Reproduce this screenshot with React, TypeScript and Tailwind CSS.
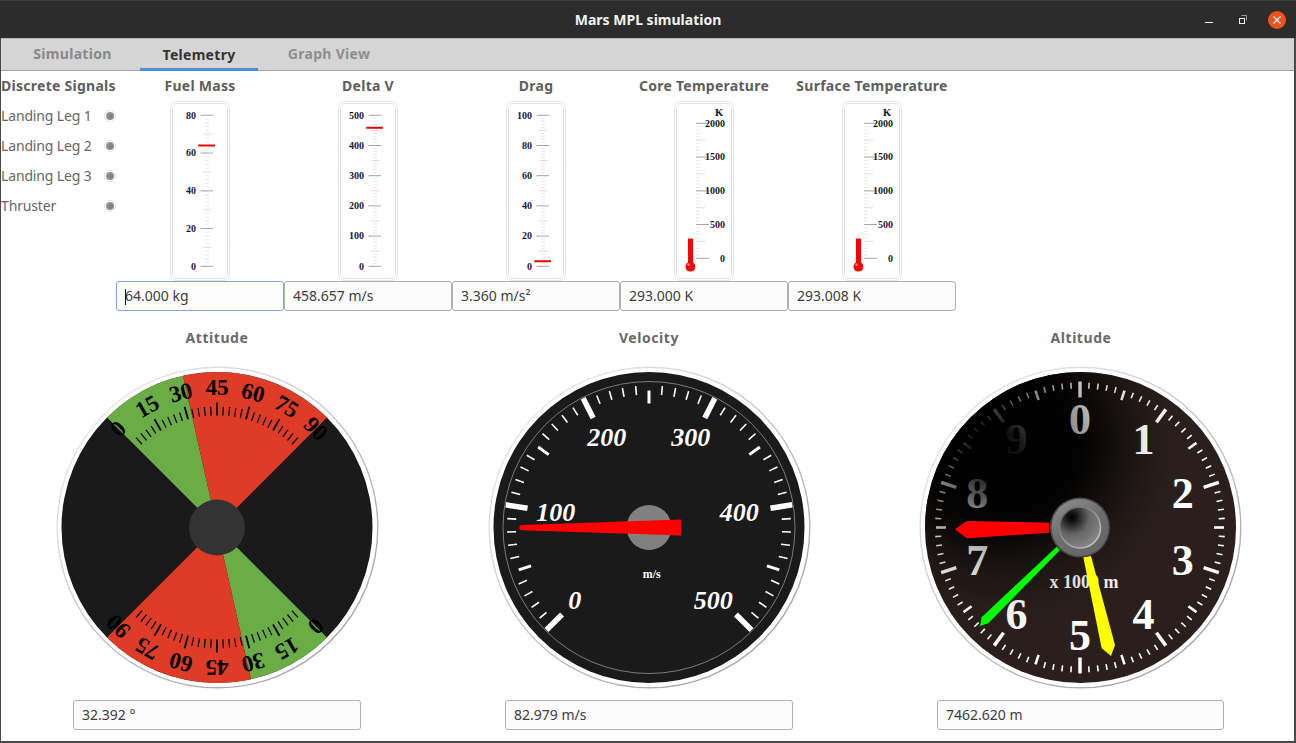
import React from "react";

const UI = "font-['Noto_Sans','Open_Sans',sans-serif]";
const SERIF = "'Liberation Serif','Times New Roman',serif";

const f = (n: number) => Math.round(n * 100) / 100;
function pol(cx: number, cy: number, r: number, deg: number): [number, number] {
  const a = (deg * Math.PI) / 180;
  return [f(cx + r * Math.sin(a)), f(cy - r * Math.cos(a))];
}
function range(n: number) {
  return Array.from({ length: n }, (_, i) => i);
}

function Sector({ cx, cy, r, from, to, fill }: { cx: number; cy: number; r: number; from: number; to: number; fill: string }) {
  const [x1, y1] = pol(cx, cy, r, from);
  const [x2, y2] = pol(cx, cy, r, to);
  return <path d={`M${cx} ${cy}L${x1} ${y1}A${r} ${r} 0 0 1 ${x2} ${y2}Z`} fill={fill} />;
}

function Ring({ id, cx, cy }: { id: string; cx: number; cy: number }) {
  return (
    <>
      <defs>
        <linearGradient id={id} x1="0.15" y1="0.1" x2="0.85" y2="0.9">
          <stop offset="0" stopColor="#e8e8e8" />
          <stop offset="1" stopColor="#a4a4a4" />
        </linearGradient>
      </defs>
      <circle cx={cx} cy={cy} r={160.3} fill="#ffffff" stroke={`url(#${id})`} strokeWidth={1.4} />
    </>
  );
}

function Attitude() {
  const cx = 165;
  const cy = 164.5;
  const half = (rot: number) => (
    <g transform={`rotate(${rot} ${cx} ${cy})`}>
      <Sector cx={cx} cy={cy} r={155.5} from={-45} to={-12.6} fill="#6aac46" />
      <Sector cx={cx} cy={cy} r={155.5} from={-12.6} to={45} fill="#de3c26" />
      {range(29).map((i) => {
        const v = -42 + i * 3;
        const maj = (v + 45) % 15 === 0;
        const [x1, y1] = pol(cx, cy, 112, v);
        const [x2, y2] = pol(cx, cy, maj ? 125 : 121, v);
        return <line key={i} x1={x1} y1={y1} x2={x2} y2={y2} stroke="#000" strokeWidth={maj ? 1.8 : 1.2} />;
      })}
      {[0, 15, 30, 45, 60, 75, 90].map((v) => {
        const a = v - 45;
        const [x, y] = pol(cx, cy, 139, a);
        return (
          <text key={v} x={x} y={y} dy="0.3em" textAnchor="middle" fontFamily={SERIF} fontWeight={700} fontSize={23} fill="#000" transform={`rotate(${a} ${x} ${y})`}>
            {v}
          </text>
        );
      })}
    </g>
  );
  return (
    <svg width={330} height={330} viewBox="0 0 330 330" className="block">
      <Ring id="ringA" cx={cx + 0.5} cy={cy} />
      <circle cx={cx} cy={cy} r={155.5} fill="#1a1a1a" />
      {half(0)}
      {half(180)}
      <circle cx={cx} cy={cy} r={28} fill="#333333" />
    </svg>
  );
}

function Velocity() {
  const cx = 165;
  const cy = 164.5;
  const labels: [string, number, number][] = [
    ["0", 284, 750],
    ["100", 227, 486],
    ["200", 380, 260],
    ["300", 632, 260],
    ["400", 778, 485],
    ["500", 700, 750],
  ];
  return (
    <svg width={330} height={330} viewBox="0 0 330 330" className="block">
      <Ring id="ringV" cx={cx + 0.5} cy={cy} />
      <circle cx={cx} cy={cy} r={155.5} fill="#1a1a1a" />
      <circle cx={cx} cy={cy} r={146} fill="none" stroke="#7a7a7a" strokeWidth={1} />
      {range(51).map((i) => {
        const a = -135 + i * 5.4;
        const major = i % 10 === 0;
        const med = i % 5 === 0;
        const r1 = major ? 123 : med ? 124 : 133;
        const r2 = major ? 145 : med ? 137 : 142;
        const [x1, y1] = pol(cx, cy, r1, a);
        const [x2, y2] = pol(cx, cy, r2, a);
        return <line key={i} x1={x1} y1={y1} x2={x2} y2={y2} stroke="#fff" strokeWidth={major ? 5.5 : med ? 3 : 1.6} />;
      })}
      {labels.map(([t, zx, zy]) => (
        <text key={t} x={f(zx / 3 - 4)} y={f(zy / 3 - 13)} dy="0.34em" textAnchor="middle" fontFamily={SERIF} fontWeight={700} fontStyle="italic" fontSize={26} fill="#fff">
          {t}
        </text>
      ))}
      <text x={f(515 / 3 - 4)} y={f(672 / 3 - 13)} dy="0.34em" textAnchor="middle" fontFamily={SERIF} fontWeight={700} fontSize={12} fill="#fff">
        m/s
      </text>
      <circle cx={cx} cy={cy} r={22.5} fill="#808080" />
      <path
        d={`M${cx + 32} ${cy - 8}L${cx + 32} ${cy + 8}L${cx - 127} ${cy + 2.8}A2.6 2.6 0 0 1 ${cx - 127} ${cy - 2.6}Z`}
        fill="#ff0000"
      />
    </svg>
  );
}

function Altitude() {
  const cx = 164;
  const cy = 164.5;
  const z = (zx: number, zy: number) => `${f(zx / 3 - 6)},${f(zy / 3 - 13)}`;
  return (
    <svg width={330} height={330} viewBox="0 0 330 330" className="block">
      <defs>
        <radialGradient id="altUnder" gradientUnits="userSpaceOnUse" cx={88} cy={78} r={170}>
          <stop offset="0" stopColor="#000" stopOpacity={1} />
          <stop offset="0.45" stopColor="#000" stopOpacity={0.85} />
          <stop offset="0.8" stopColor="#000" stopOpacity={0.15} />
          <stop offset="1" stopColor="#000" stopOpacity={0} />
        </radialGradient>
        <radialGradient id="altShade" gradientUnits="userSpaceOnUse" cx={80.7} cy={87} r={190}>
          <stop offset="0" stopColor="#000" stopOpacity={0.97} />
          <stop offset="0.12" stopColor="#000" stopOpacity={0.93} />
          <stop offset="0.2" stopColor="#000" stopOpacity={0.78} />
          <stop offset="0.26" stopColor="#000" stopOpacity={0.66} />
          <stop offset="0.33" stopColor="#000" stopOpacity={0.5} />
          <stop offset="0.47" stopColor="#000" stopOpacity={0.38} />
          <stop offset="0.54" stopColor="#000" stopOpacity={0.25} />
          <stop offset="0.78" stopColor="#000" stopOpacity={0.08} />
          <stop offset="1" stopColor="#000" stopOpacity={0} />
        </radialGradient>
        <linearGradient id="altHubOuter" x1="0.2" y1="0" x2="0.8" y2="1">
          <stop offset="0" stopColor="#8c8c8c" />
          <stop offset="0.5" stopColor="#6c6c6c" />
          <stop offset="1" stopColor="#666666" />
        </linearGradient>
        <radialGradient id="altHubInner" cx="0.3" cy="0.25" r="0.85">
          <stop offset="0" stopColor="#000" />
          <stop offset="0.12" stopColor="#111" />
          <stop offset="0.5" stopColor="#666" />
          <stop offset="1" stopColor="#8a8a8a" />
        </radialGradient>
        <linearGradient id="altHubRing" x1="0.15" y1="0.1" x2="0.85" y2="0.9">
          <stop offset="0" stopColor="#6a6a6a" />
          <stop offset="1" stopColor="#c4c4c4" />
        </linearGradient>
      </defs>
      <Ring id="ringH" cx={cx + 0.5} cy={cy} />
      <circle cx={cx + 0.5} cy={cy} r={155.5} fill="#2a1f1c" />
      <circle cx={cx + 0.5} cy={cy} r={155.5} fill="url(#altUnder)" />
      {range(100).map((i) => {
        const a = i * 3.6;
        const major = i % 10 === 0;
        const med = i % 5 === 0;
        const r1 = major ? 130 : med ? 134 : 139;
        const r2 = major ? 146 : med ? 144 : 145;
        const [x1, y1] = pol(cx, cy, r1, a);
        const [x2, y2] = pol(cx, cy, r2, a);
        return <line key={i} x1={x1} y1={y1} x2={x2} y2={y2} stroke="#fff" strokeWidth={major ? 3.5 : med ? 2.6 : 1.6} />;
      })}
      {range(10).map((i) => {
        const [x, y] = pol(cx, cy, 108, i * 36);
        return (
          <text key={i} x={x} y={y} dy="0.32em" textAnchor="middle" fontFamily={SERIF} fontWeight={700} fontSize={44} fill="#fff">
            {i}
          </text>
        );
      })}
      <text x={f(522 / 3 - 6)} y={f(697 / 3 - 13)} dy="0.34em" textAnchor="middle" fontFamily={SERIF} fontWeight={700} fontSize={18} fill="#f2f2f2">
        x 1000 m
      </text>
      <circle cx={cx + 0.5} cy={cy} r={155.5} fill="url(#altShade)" />
      <polygon points={[z(418, 518), z(170, 513), z(135, 538), z(170, 565), z(418, 548)].join(" ")} fill="#ff0000" />
      <polygon points={[z(440, 590), z(450, 600), z(235, 820), z(210, 828), z(215, 802)].join(" ")} fill="#00ff00" />
      <polygon points={[z(520, 622), z(543, 618), z(615, 885), z(603, 918), z(575, 895)].join(" ")} fill="#ffff00" />
      <circle cx={cx} cy={cy} r={30} fill="#4a4a4a" />
      <circle cx={cx} cy={cy} r={28.5} fill="url(#altHubOuter)" />
      <circle cx={cx} cy={cy} r={20.5} fill="url(#altHubInner)" stroke="url(#altHubRing)" strokeWidth={1.6} />
    </svg>
  );
}

function ScaleTicks({ top, bottom, majors, x, wMaj, wPink, wMin, minorX }: { top: number; bottom: number; majors: number; x: number; wMaj: number; wPink: [number, number]; wMin: [number, number]; minorX: number }) {
  const divs = majors * 10;
  const step = (bottom - top) / divs;
  const midMajor = majors % 2 === 0 ? divs / 2 : -1;
  return (
    <>
      {range(divs + 1).map((i) => {
        const y = f(top + i * step);
        if (i % 10 === 0) {
          const isMid = i === midMajor;
          return <line key={i} x1={x} y1={y} x2={x + wMaj} y2={y} stroke={isMid ? "#c4c4c4" : "#9a9a9a"} strokeWidth={isMid ? 1.6 : 0.9} />;
        }
        if (i % 5 === 0) {
          return <line key={i} x1={wPink[0]} y1={y} x2={wPink[1]} y2={y} stroke="#fbc4c4" strokeWidth={0.8} />;
        }
        return <line key={i} x1={minorX} y1={y} x2={minorX + (wMin[1] - wMin[0])} y2={y} stroke="#e2e2e2" strokeWidth={0.8} />;
      })}
    </>
  );
}

function Card() {
  return (
    <>
      <rect x={0.5} y={0.5} width={59} height={179} rx={6} fill="#fff" stroke="#e6e6e6" />
      <rect x={2.5} y={2.5} width={55} height={175} rx={5} fill="#fff" stroke="#e0e0e0" />
    </>
  );
}

function BarGauge({ labels, frac }: { labels: string[]; frac: number }) {
  const top = 14.3;
  const bottom = 165.3;
  const majors = labels.length - 1;
  const step = (bottom - top) / majors;
  const my = f(bottom - frac * (bottom - top));
  return (
    <svg width={60} height={180} viewBox="0 0 60 180" className="block mx-auto">
      <Card />
      <ScaleTicks top={top} bottom={bottom} majors={majors} x={30.5} wMaj={12.5} wPink={[33, 41.5]} wMin={[35, 39]} minorX={35} />
      {labels.map((t, i) => (
        <text key={t} x={26} y={f(top + i * step)} dy="0.33em" textAnchor="end" fontFamily={SERIF} fontWeight={700} fontSize={10} fill="#1a1a2e">
          {t}
        </text>
      ))}
      <line x1={28.3} y1={my} x2={45} y2={my} stroke="#f00000" strokeWidth={2} />
    </svg>
  );
}

function Thermo({ frac }: { frac: number }) {
  const top = 22.3;
  const bottom = 157.3;
  const labels = ["2000", "1500", "1000", "500", "0"];
  const step = (bottom - top) / 4;
  const my = f(bottom - frac * (bottom - top));
  return (
    <svg width={60} height={180} viewBox="0 0 60 180" className="block mx-auto">
      <Card />
      <text x={45} y={11.7} dy="0.34em" textAnchor="middle" fontFamily={SERIF} fontWeight={700} fontSize={10.5} fill="#111">
        K
      </text>
      <ScaleTicks top={top} bottom={bottom} majors={4} x={22} wMaj={13} wPink={[22, 31]} wMin={[22, 26]} minorX={22} />
      {labels.map((t, i) => (
        <text key={t} x={51} y={f(top + i * step)} dy="0.33em" textAnchor="end" fontFamily={SERIF} fontWeight={700} fontSize={10} fill="#1a1a2e">
          {t}
        </text>
      ))}
      <rect x={14} y={my} width={5} height={f(165.7 - my)} fill="#ff0000" />
      <circle cx={16.4} cy={165.7} r={4.9} fill="#ff0000" />
      <circle cx={14.6} cy={163.8} r={1.2} fill="#ff9a9a" />
    </svg>
  );
}

function ValueBox({ text, focused, className = "" }: { text: string; focused?: boolean; className?: string }) {
  return (
    <div
      className={`relative flex items-center h-[30px] rounded-[3px] border pl-2 pr-2 pb-[2px] text-[14px] text-[#3d3d3d] whitespace-nowrap ${
        focused ? "border-[#7fa6d6] bg-[#fdfdfd]" : "border-[#b0b0b0] bg-[#fbfbfb]"
      } ${className}`}
    >
      {focused && <span className="absolute left-[8px] top-[7px] w-px h-[16px] bg-[#111]" />}
      {text}
    </div>
  );
}

function Led() {
  return (
    <span className="w-[12px] h-[12px] rounded-full border border-[#e2e2e2] p-px">
      <span className="block w-full h-full rounded-full bg-[radial-gradient(circle_at_60%_55%,#7c7c7c_0%,#929292_60%,#b0b0b0_100%)]" />
    </span>
  );
}

const bars = [
  { title: "Fuel Mass", value: "64.000 kg", focused: true, el: <BarGauge labels={["80", "60", "40", "20", "0"]} frac={0.8} /> },
  { title: "Delta V", value: "458.657 m/s", el: <BarGauge labels={["500", "400", "300", "200", "100", "0"]} frac={0.91731} /> },
  { title: "Drag", value: "3.360 m/s²", el: <BarGauge labels={["100", "80", "60", "40", "20", "0"]} frac={0.0336} /> },
  { title: "Core Temperature", value: "293.000 K", el: <Thermo frac={0.1465} /> },
  { title: "Surface Temperature", value: "293.008 K", el: <Thermo frac={0.1465} /> },
];

const dials = [
  { title: "Attitude", value: "32.392 °", box: "w-[288px] mt-[7px]", el: <Attitude /> },
  { title: "Velocity", value: "82.979 m/s", box: "w-[288px] mt-[7px]", el: <Velocity /> },
  { title: "Altitude", value: "7462.620 m", box: "w-[287px] mt-[7px] mr-[1px]", el: <Altitude /> },
];

export default function App() {
  return (
    <div className={`${UI} w-[1296px] h-[743px] flex flex-col overflow-hidden bg-[#4a4a4a]`}>
      <header className="h-[38px] shrink-0 grid grid-cols-[1fr_auto_1fr] items-center bg-[#2c2c2c] border-t border-[#3e3e3e] text-white">
        <div />
        <h1 className="text-[14px] font-bold text-[#f2f2f2] pb-[1px]">Mars MPL simulation</h1>
        <div className="flex items-center justify-end h-full">
          <svg width={12} height={12} viewBox="0 0 12 12" className="mr-[20px]">
            <rect x={1} y={8} width={8} height={1} fill="#eee" />
          </svg>
          <svg width={12} height={12} viewBox="0 0 12 12" className="mr-[20px]">
            <path d="M5.5 1.5H10.5V6.5" fill="none" stroke="#9a9a9a" />
            <rect x={3.5} y={4.5} width={5} height={5} fill="none" stroke="#eee" />
          </svg>
          <span className="w-[18px] h-[18px] mr-[10px] rounded-full bg-[#e9541f] flex items-center justify-center">
            <svg width={10} height={10} viewBox="0 0 10 10">
              <path d="M1.5 1.5L8.5 8.5M8.5 1.5L1.5 8.5" stroke="#fff" strokeWidth={1.3} />
            </svg>
          </span>
        </div>
      </header>
      <div className="flex-1 flex flex-col ml-px mr-[2px] mb-[2px] bg-white min-h-0">
        <nav className="h-[33px] shrink-0 flex items-stretch gap-[10px] pl-[12px] bg-[#d5d5d5] border-t border-b border-t-[#b8b8b8] border-b-[#a6a6a6] text-[14px] font-bold tracking-[0.3px]">
          <div className="w-[117px] flex items-center justify-center pb-[2px] pl-[2px] text-[#8a8a8a]">Simulation</div>
          <div className="w-[118px] flex items-center justify-center text-[#333] border-b-[3px] border-[#4a90d9] -mb-px pt-px">Telemetry</div>
          <div className="w-[118px] flex items-center justify-center pb-[2px] pl-[4px] text-[#8f8f8f]">Graph View</div>
        </nav>
        <section className="flex h-[240px] shrink-0">
          <div className="w-[115px] shrink-0">
            <div className="h-[30px] flex items-center pb-[2px] text-[14px] font-bold tracking-[0.27px] text-[#5e5e5e] whitespace-nowrap">Discrete Signals</div>
            {["Landing Leg 1", "Landing Leg 2", "Landing Leg 3", "Thruster"].map((s) => (
              <div key={s} className="h-[30px] flex items-center justify-between text-[14px] tracking-[-0.15px] text-[#666]">
                <span className="pb-[2px]">{s}</span>
                <span className="flex"><Led /></span>
              </div>
            ))}
          </div>
          {bars.map((b) => (
            <div key={b.title} className="w-[168px] shrink-0">
              <div className="h-[30px] flex items-center justify-center pb-[2px] text-[14px] font-bold tracking-[0.27px] text-[#5e5e5e] whitespace-nowrap">{b.title}</div>
              {b.el}
              <ValueBox text={b.value} focused={b.focused} />
            </div>
          ))}
        </section>
        <section className="flex flex-1 min-h-0">
          {dials.map((d) => (
            <div key={d.title} className="w-[432px] shrink-0 flex flex-col items-center">
              <div className="h-[52px] w-full flex items-center justify-center text-[14px] font-bold tracking-[0.55px] text-[#6a6a6a]">{d.title}</div>
              {d.el}
              <ValueBox text={d.value} className={d.box} />
            </div>
          ))}
        </section>
      </div>
    </div>
  );
}
